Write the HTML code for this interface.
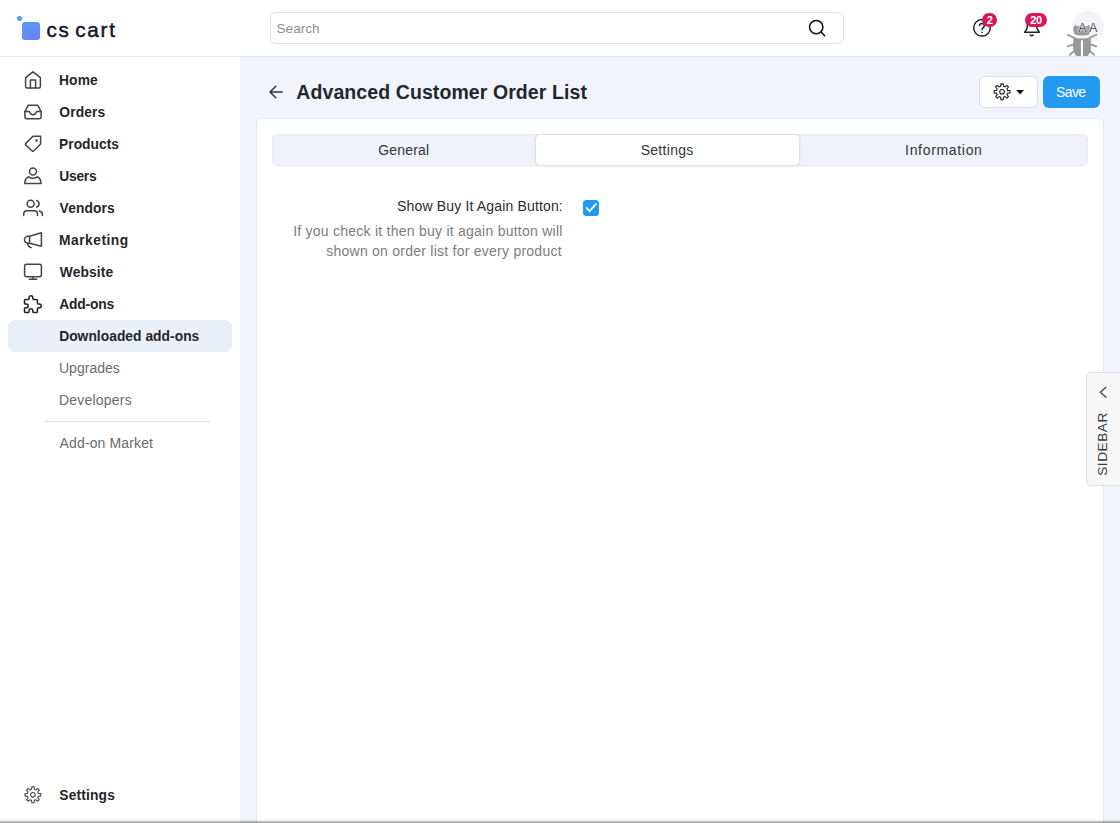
<!DOCTYPE html>
<html lang="en">
<head>
<meta charset="utf-8">
<title>Advanced Customer Order List</title>
<style>
*{box-sizing:border-box;margin:0;padding:0}
html,body{width:1120px;height:823px;overflow:hidden}
body{font-family:"Liberation Sans",sans-serif;font-size:14px;color:#222;background:#f1f4fb;position:relative}
.abs{position:absolute}
svg{display:block;overflow:visible}
/* header */
#top{position:absolute;left:0;top:0;width:1120px;height:57px;background:#fff;border-bottom:1px solid #e4e7ee}
#logo-sq{position:absolute;left:22px;top:22px;width:18px;height:18px;border-radius:3px;background:linear-gradient(160deg,#5b9af8,#6a7ff2)}
#logo-dot{position:absolute;left:17px;top:16.2px;width:5px;height:5px;border-radius:50%;background:#5d97f6}
#logo-txt{position:absolute;left:46px;top:15px;font-size:22px;line-height:26px;color:#15162c;letter-spacing:0.4px;white-space:nowrap}
#search{position:absolute;left:270px;top:12px;width:574px;height:32px;border:1px solid #e1e3e8;border-radius:6px;background:#fff}
#search span{position:absolute;left:6px;top:7px;font-size:14px;line-height:16px;color:#8b8f98}
/* sidebar */
#side{position:absolute;left:0;top:57px;width:240px;height:766px;background:#fff}
.mi{position:absolute;left:59px;font-weight:bold;font-size:14.5px;line-height:18px;color:#222;white-space:nowrap}
.si{position:absolute;left:59px;font-size:14.5px;line-height:18px;color:#666;white-space:nowrap}
.ic{position:absolute;left:23px;width:20px;height:20px}
.ic svg{width:20px;height:20px;fill:none;stroke:#333;stroke-width:1.5;stroke-linecap:round;stroke-linejoin:round}
#active{position:absolute;left:8px;top:320px;width:224px;height:32px;border-radius:6px;background:#ebeff7}
#sep{position:absolute;left:45px;top:421px;width:165px;height:1px;background:#dcdfe5}
/* content */
#card{position:absolute;left:256px;top:118px;width:848px;height:720px;background:#fff;border:1px solid #e3e6ef;border-radius:5px}
#title{position:absolute;left:296px;top:79px;font-size:20px;line-height:26px;font-weight:bold;color:#222;white-space:nowrap}
#btn-gear{position:absolute;left:978.5px;top:76px;width:59px;height:32px;border:1px solid #dcdfe6;border-radius:6px;background:#fff}
#btn-save{position:absolute;left:1043px;top:76px;width:57px;height:32px;border-radius:6px;background:#2499f2;color:#fff;font-size:14.5px;line-height:32px;text-align:center}
#tabs{position:absolute;left:272px;top:134px;width:816px;height:32px;border-radius:5px;background:#f0f2f9;border:1px solid #e8eaf0}
#tab-act{position:absolute;left:534.5px;top:134px;width:265px;height:32px;border-radius:5px;background:#fff;border:1px solid #dfe2e9;box-shadow:0 1px 2px rgba(0,0,0,.08)}
.tab{position:absolute;top:141px;font-size:14.5px;line-height:18px;color:#333;white-space:nowrap;transform:translateX(-50%)}
#lbl{position:absolute;right:558px;top:197px;font-size:14.5px;line-height:18px;color:#222;white-space:nowrap}
.hint{position:absolute;right:558px;font-size:14.5px;line-height:18px;color:#777;white-space:nowrap}
#cb{position:absolute;left:583px;top:200px;width:16px;height:16px;border-radius:3.5px;background:#2499f2}
#sbtab{position:absolute;left:1086px;top:372px;width:40px;height:114px;background:#f7f7f8;border:1px solid #dddfe3;border-radius:5px}
#sbtxt{position:absolute;left:1103.2px;top:443.8px;font-size:13.6px;line-height:16px;color:#3a3b3e;letter-spacing:.55px;transform:translate(-50%,-50%) rotate(-90deg);white-space:nowrap}
#botshadow{position:absolute;left:0;top:819px;width:1120px;height:4px;background:linear-gradient(to bottom,rgba(0,0,0,.02) 0 25%,rgba(0,0,0,.08) 25% 50%,rgba(0,0,0,.21) 50% 75%,rgba(0,0,0,.35) 75% 100%)}

.badge{position:absolute;height:14.6px;border-radius:7.3px;background:#d6175a;color:#fff;font-weight:bold;font-size:11px;line-height:15.8px;text-align:center;letter-spacing:-.3px}
#avatar{position:absolute;left:1072px;top:11px;width:32px;height:32px;border-radius:50%;background:#f3f4f8}
#avtxt{position:absolute;left:1078.3px;top:18.6px;font-size:12.6px;line-height:18px;color:#505154;letter-spacing:2.4px;white-space:nowrap;text-shadow:0 0 2px #fff,0 0 2px #fff,0 0 1px #fff}
.tx{position:absolute;white-space:nowrap}
#logo{-webkit-text-stroke:.5px #15162c;word-spacing:-3px}
</style>
</head>
<body>
<div id="side"></div>
<div id="top"></div>
<div id="logo-dot"></div><div id="logo-sq"></div>
<div id="search"></div>

<div id="active"></div>
<div id="sep"></div>

<div id="btn-gear"></div>
<div id="btn-save"></div>
<div id="card"></div>
<div id="tabs"></div><div id="tab-act"></div>
<div id="cb"></div>
<div id="logo" class="tx" style="left:46.44px;top:14.96px;font-size:20.6px;line-height:29px;font-weight:normal;color:#15162c;letter-spacing:1.798px">cs cart</div>
<div id="srch" class="tx" style="left:276.57px;top:18.69px;font-size:13.6px;line-height:19px;font-weight:normal;color:#8d9096;letter-spacing:-0.032px">Search</div>
<div id="m1" class="tx" style="left:59.01px;top:70.52px;font-size:13.8px;line-height:19px;font-weight:bold;color:#24262b;letter-spacing:0.124px">Home</div>
<div id="m2" class="tx" style="left:59.29px;top:102.52px;font-size:13.8px;line-height:19px;font-weight:bold;color:#24262b;letter-spacing:0.130px">Orders</div>
<div id="m3" class="tx" style="left:59.00px;top:134.52px;font-size:13.8px;line-height:19px;font-weight:bold;color:#24262b;letter-spacing:0.036px">Products</div>
<div id="m4" class="tx" style="left:59.24px;top:166.52px;font-size:13.8px;line-height:19px;font-weight:bold;color:#24262b;letter-spacing:-0.242px">Users</div>
<div id="m5" class="tx" style="left:59.57px;top:198.52px;font-size:13.8px;line-height:19px;font-weight:bold;color:#24262b;letter-spacing:0.127px">Vendors</div>
<div id="m6" class="tx" style="left:59.00px;top:230.52px;font-size:13.8px;line-height:19px;font-weight:bold;color:#24262b;letter-spacing:0.503px">Marketing</div>
<div id="m7" class="tx" style="left:59.73px;top:262.52px;font-size:13.8px;line-height:19px;font-weight:bold;color:#24262b;letter-spacing:0.135px">Website</div>
<div id="m8" class="tx" style="left:59.18px;top:294.52px;font-size:13.8px;line-height:19px;font-weight:bold;color:#24262b;letter-spacing:-0.153px">Add-ons</div>
<div id="m9" class="tx" style="left:59.16px;top:326.52px;font-size:13.8px;line-height:19px;font-weight:bold;color:#24262b;letter-spacing:0.036px">Downloaded add-ons</div>
<div id="s1" class="tx" style="left:59.00px;top:357.85px;font-size:14.0px;line-height:20px;font-weight:normal;color:#6a6c70;letter-spacing:0.008px">Upgrades</div>
<div id="s2" class="tx" style="left:58.90px;top:389.85px;font-size:14.0px;line-height:20px;font-weight:normal;color:#6a6c70;letter-spacing:0.218px">Developers</div>
<div id="s3" class="tx" style="left:59.60px;top:432.95px;font-size:14.0px;line-height:20px;font-weight:normal;color:#6a6c70;letter-spacing:0.128px">Add-on Market</div>
<div id="m10" class="tx" style="left:59.30px;top:786.22px;font-size:13.8px;line-height:19px;font-weight:bold;color:#24262b;letter-spacing:0.161px">Settings</div>
<div id="title" class="tx" style="left:296.34px;top:79.44px;font-size:19.5px;line-height:27px;font-weight:bold;color:#24262b;letter-spacing:0.086px">Advanced Customer Order List</div>
<div id="t1" class="tx" style="left:378.20px;top:140.15px;font-size:14.0px;line-height:20px;font-weight:normal;color:#333538;letter-spacing:0.197px">General</div>
<div id="t2" class="tx" style="left:640.64px;top:140.15px;font-size:14.0px;line-height:20px;font-weight:normal;color:#333538;letter-spacing:0.308px">Settings</div>
<div id="t3" class="tx" style="left:905.09px;top:140.15px;font-size:14.0px;line-height:20px;font-weight:normal;color:#333538;letter-spacing:0.679px">Information</div>
<div id="lbl" class="tx" style="left:397.07px;top:196.05px;font-size:14.0px;line-height:20px;font-weight:normal;color:#2a2c30;letter-spacing:0.159px">Show Buy It Again Button:</div>
<div id="h1" class="tx" style="left:293.17px;top:221.25px;font-size:14.0px;line-height:20px;font-weight:normal;color:#7b7d81;letter-spacing:0.246px">If you check it then buy it again button will</div>
<div id="h2" class="tx" style="left:326.24px;top:240.85px;font-size:14.0px;line-height:20px;font-weight:normal;color:#7b7d81;letter-spacing:0.247px">shown on order list for every product</div>
<div id="save" class="tx" style="left:1056.08px;top:82.35px;font-size:14.0px;line-height:20px;font-weight:normal;color:#ffffff;letter-spacing:-0.631px">Save</div>
<div id="sbtab"></div>
<div id="sbtxt">SIDEBAR</div>

<svg id="ico" class="abs" style="left:0;top:0;width:1120px;height:823px" width="1120" height="823" viewBox="0 0 1120 823" fill="none" stroke="#444" stroke-width="1.5" stroke-linecap="round" stroke-linejoin="round">
<!-- home -->
<path d="M25.6 77.7 L33 71.8 L40.4 77.7 V86.5 Q40.4 88 38.9 88 H27.1 Q25.6 88 25.6 86.5 Z"/>
<path d="M30.4 88 V80 H35.6 V88"/>
<!-- orders / inbox -->
<path d="M24.9 111.6 L28.3 105.2 H37.7 L41.1 111.6 V116.7 Q41.1 118.7 39.1 118.7 H26.9 Q24.9 118.7 24.9 116.7 Z"/>
<path d="M24.9 111.6 H28.6 Q29.6 111.6 30 112.6 Q31 114.8 33 114.8 Q35 114.8 36 112.6 Q36.4 111.6 37.4 111.6 H41.1"/>
<!-- products / tag -->
<path d="M32.9 136.2 H40.6 V144 L33.6 151 Q32.9 151.6 32.2 151 L25.6 144.9 Q25 144.3 25.6 143.6 Z"/>
<circle cx="36.5" cy="140.4" r="1.25" fill="#444" stroke="none"/>
<!-- users / user -->
<circle cx="33" cy="171.5" r="3.5"/>
<path d="M24.8 183.4 H41 Q41 178.6 37.2 176.8 Q35.3 178.3 33 178.3 Q30.6 178.3 28.7 176.8 Q24.8 178.6 24.8 183.4 Z"/>
<!-- vendors / users -->
<circle cx="30.6" cy="203.7" r="3.5"/>
<path d="M36.7 200.4 A3.5 3.5 0 0 1 36.7 207"/>
<path d="M23.7 215.4 V214 Q23.7 210.7 27 210.7 H34.2 Q37.5 210.7 37.5 214 V215.4"/>
<path d="M39.2 210.9 Q42.4 211.4 42.4 214.4 V215.4"/>
<!-- marketing / megaphone -->
<path d="M29.6 236.3 L41.4 232.7 V246.3 L29.6 243.3 Z"/>
<path d="M29.6 236.3 H28 A3.5 3.5 0 0 0 28 243.3 H29.6"/>
<path d="M27.6 243.6 Q28 246.6 31.2 247.6"/>
<!-- website / monitor -->
<rect x="24.6" y="264.3" width="16.8" height="12.4" rx="2"/>
<path d="M33 276.7 V279.3 M29.3 279.3 H36.7"/>
<!-- add-ons / puzzle -->
<g transform="translate(32.8 304.1) scale(.925) translate(-12 -12)" stroke="#222" stroke-width="1.65"><path d="M4 7h3a1 1 0 0 0 1 -1v-1a2 2 0 0 1 4 0v1a1 1 0 0 0 1 1h3a1 1 0 0 1 1 1v3a1 1 0 0 0 1 1h1a2 2 0 0 1 0 4h-1a1 1 0 0 0 -1 1v3a1 1 0 0 1 -1 1h-3a1 1 0 0 1 -1 -1v-1a2 2 0 0 0 -4 0v1a1 1 0 0 1 -1 1h-3a1 1 0 0 1 -1 -1v-3a1 1 0 0 1 1 -1h1a2 2 0 0 0 0 -4h-1a1 1 0 0 1 -1 -1v-3a1 1 0 0 1 1 -1"/></g>
<!-- settings gear -->
<path d="M31.57 789.26 L31.71 786.89 L34.09 786.89 L34.23 789.26 L35.88 789.94 L37.65 788.36 L39.34 790.05 L37.76 791.82 L38.44 793.47 L40.81 793.61 L40.81 795.99 L38.44 796.13 L37.76 797.78 L39.34 799.55 L37.65 801.24 L35.88 799.66 L34.23 800.34 L34.09 802.71 L31.71 802.71 L31.57 800.34 L29.92 799.66 L28.15 801.24 L26.46 799.55 L28.04 797.78 L27.36 796.13 L24.99 795.99 L24.99 793.61 L27.36 793.47 L28.04 791.82 L26.46 790.05 L28.15 788.36 L29.92 789.94Z" stroke-width="1.05"/>
<circle cx="32.9" cy="794.8" r="2.3" stroke-width="1.05"/>
<!-- search -->
<g stroke="#111" stroke-width="1.5"><circle cx="816.2" cy="27.1" r="6.7"/><path d="M821.1 32.1 L824.7 35.7"/></g>
<!-- help -->
<g stroke="#222" stroke-width="1.5"><circle cx="982" cy="27.8" r="8.3"/><path d="M979.6 25.6 Q979.6 23.4 982 23.4 Q984.4 23.4 984.4 25.6 Q984.4 27 983 27.8 Q982 28.5 982 29.8"/><path d="M982 32.4 v0.1"/></g>
<!-- bell -->
<g stroke="#222" stroke-width="1.5"><path d="M1024.6 32.3 H1039.4 L1037.3 29 Q1036.6 27.5 1036.6 25 Q1036.6 20 1032 20 Q1027.4 20 1027.4 25 Q1027.4 27.5 1026.7 29 Z"/><path d="M1030.2 35 Q1031.7 36.4 1033.2 35"/></g>
<!-- back arrow -->
<g stroke="#333" stroke-width="1.5"><path d="M270 92 H282.2 M275.8 86.2 L270 92 L275.8 97.8"/></g>
<!-- gear btn -->
<path d="M1000.72 86.21 L1000.86 83.84 L1003.24 83.84 L1003.38 86.21 L1005.03 86.89 L1006.80 85.31 L1008.49 87.00 L1006.91 88.77 L1007.59 90.42 L1009.96 90.56 L1009.96 92.94 L1007.59 93.08 L1006.91 94.73 L1008.49 96.50 L1006.80 98.19 L1005.03 96.61 L1003.38 97.29 L1003.24 99.66 L1000.86 99.66 L1000.72 97.29 L999.07 96.61 L997.30 98.19 L995.61 96.50 L997.19 94.73 L996.51 93.08 L994.14 92.94 L994.14 90.56 L996.51 90.42 L997.19 88.77 L995.61 87.00 L997.30 85.31 L999.07 86.89Z" stroke="#222" stroke-width="1.1"/>
<circle cx="1002.05" cy="91.75" r="2.3" stroke="#222" stroke-width="1.1"/>
<path d="M1016.2 90 H1024 L1020.1 94.4 Z" fill="#111" stroke="none"/>
<!-- checkbox tick -->
<path d="M586.6 208 L589.6 211.2 L595.8 204.2" stroke="#fff" stroke-width="1.8"/>
<!-- sidebar chevron -->
<path d="M1106 387.3 L1100.4 392.3 L1106 397.3" stroke="#444" stroke-width="1.3"/>
</svg>

<div id="b1" class="badge" style="left:982.3px;top:12.9px;width:14.6px">2</div>
<div id="b2" class="badge" style="left:1025.2px;top:12.9px;width:21.6px">20</div>
<div id="avatar"></div>
<svg class="abs" style="left:0;top:0;width:1120px;height:56px;overflow:hidden" width="1120" height="56" viewBox="0 0 1120 56">
<g fill="#999" stroke="none">
<path d="M1075.4 34.7 C1072.6 31 1072.6 26.6 1075.6 25 C1076.4 26.4 1077.6 26.6 1079 26 C1081 25.2 1083 25.2 1085 26 C1086.4 26.6 1087.6 26.4 1088.4 25 C1091.4 26.6 1091.4 31 1088.8 34.7 Q1082 36.2 1075.4 34.7 Z"/>
<path d="M1073.1 47 C1073.1 42 1073.3 39.5 1073.5 37.2 Q1082 39.9 1090.5 37.2 C1090.7 39.5 1090.9 42 1090.9 47 C1090.9 53 1088 57.5 1083 58.5 V40.2 H1080.9 V58.5 C1076 57.5 1073.1 53 1073.1 47 Z"/>
</g>
<g stroke="#999" stroke-width="1.8" stroke-linecap="round" fill="none">
<path d="M1067.7 34.7 L1074.2 37.9 M1096.3 34.7 L1089.8 37.9"/>
<path d="M1067.7 46.4 L1073.6 44.4 M1096.3 46.4 L1090.4 44.4"/>
<path d="M1069.8 54.8 L1074.7 50.3 M1094.2 54.8 L1089.3 50.3"/>
</g>
</svg>
<div id="avtxt">AA</div>
<div id="botshadow"></div>
</body>
</html>
